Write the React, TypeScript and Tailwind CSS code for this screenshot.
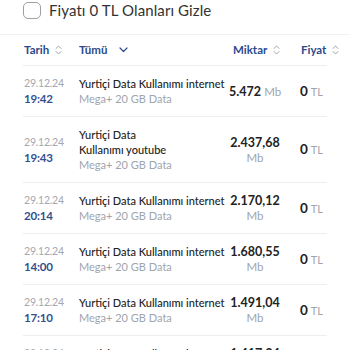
import React from 'react'

type Row = {
  date: string
  time: string
  title: string[]
  sub: string
  amount: string
}

const rows: Row[] = [
  { date: '29.12.24', time: '19:42', title: ['Yurtiçi Data Kullanımı internet'], sub: 'Mega+ 20 GB Data', amount: '5.472' },
  { date: '29.12.24', time: '19:43', title: ['Yurtiçi Data', 'Kullanımı youtube'], sub: 'Mega+ 20 GB Data', amount: '2.437,68' },
  { date: '29.12.24', time: '20:14', title: ['Yurtiçi Data Kullanımı internet'], sub: 'Mega+ 20 GB Data', amount: '2.170,12' },
  { date: '29.12.24', time: '14:00', title: ['Yurtiçi Data Kullanımı internet'], sub: 'Mega+ 20 GB Data', amount: '1.680,55' },
  { date: '29.12.24', time: '17:10', title: ['Yurtiçi Data Kullanımı internet'], sub: 'Mega+ 20 GB Data', amount: '1.491,04' },
  { date: '29.12.24', time: '17:12', title: ['Yurtiçi Data Kullanımı internet'], sub: 'Mega+ 20 GB Data', amount: '1.417,34' },
]

function SortIcon() {
  return (
    <svg width="7" height="10" viewBox="0 0 7 10" fill="none" className="ml-[6px] shrink-0">
      <path d="M1 3.5L3.5 1L6 3.5" stroke="#9ca3af" strokeWidth="1" strokeLinecap="round" strokeLinejoin="round" />
      <path d="M1 6.5L3.5 9L6 6.5" stroke="#9ca3af" strokeWidth="1" strokeLinecap="round" strokeLinejoin="round" />
    </svg>
  )
}

export default function App() {
  return (
    <div className="w-[350px] h-[350px] overflow-hidden bg-white font-['Lato',sans-serif]">
      <div className="flex items-center gap-[8px] px-[23px] h-[35px] pb-[15px] pt-[1px] border-b border-[#f1f2f4]">
        <div className="w-[18px] h-[17px] rounded-[5px] border-[1.5px] border-[#9ca0a6]" />
        <span className="text-[15px] text-[#333] tracking-[0.1px]">Fiyatı 0 TL Olanları Gizle</span>
      </div>

      <div className="flex items-center h-[31px] mx-[23px] border-b border-[#eceef1] text-[11.5px] font-bold text-[#2c4a8c] whitespace-nowrap">
        <div className="w-[56px] shrink-0 pl-[1px] flex items-center">
          Tarih
          <SortIcon />
        </div>
        <div className="w-[150px] shrink-0 flex items-center">
          Tümü
          <svg width="9" height="6" viewBox="0 0 9 6" fill="none" className="ml-[12px]">
            <path d="M1 1L4.5 4.5L8 1" stroke="#2c4a8c" strokeWidth="1.2" strokeLinecap="round" strokeLinejoin="round" />
          </svg>
        </div>
        <div className="w-[52px] shrink-0 flex items-center pl-[4px]">
          Miktar
          <SortIcon />
        </div>
        <div className="flex items-center pl-[20px]">
          Fiyat
          <SortIcon />
        </div>
      </div>

      <div className="mx-[23px]">
        {rows.map((r, i) => (
          <div key={i} className="flex items-center py-[10px] border-b border-[#eceef1] leading-[15px]">
            <div className="w-[56px] shrink-0 pl-[1px] text-[10.5px] tracking-[-0.2px]">
              <div className="text-[#a3a8b0]">{r.date}</div>
              <div className="font-bold text-[#33508f] text-[11.5px]">{r.time}</div>
            </div>
            <div className="w-[150px] shrink-0 pr-[2px] text-[11px] whitespace-nowrap">
              {r.title.map((t, j) => (
                <div key={j} className="text-[#222] font-medium">{t}</div>
              ))}
              <div className="text-[#a0a5ad]">{r.sub}</div>
            </div>
            <div className="w-[52px] shrink-0 text-center text-[12.5px] leading-[15px] whitespace-nowrap">
              <span className={`font-bold text-[#222] ${i === 0 ? '' : 'block'}`}>{r.amount}</span>{' '}
              <span className="text-[11.5px] text-[#a0a5ad]">Mb</span>
            </div>
            <div className="flex-1 flex justify-end items-baseline pr-[4px]">
              <span className="text-[13.5px] font-bold text-[#222]">0</span>
              <span className="ml-[3px] text-[11px] text-[#a0a5ad]">TL</span>
            </div>
          </div>
        ))}
      </div>
    </div>
  )
}
